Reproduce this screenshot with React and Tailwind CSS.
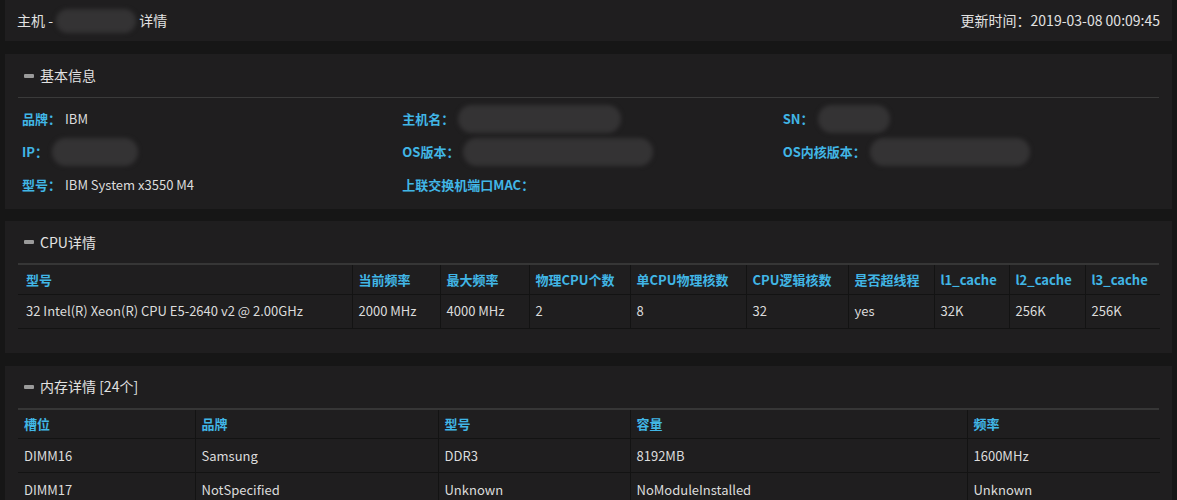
const font = { fontFamily: '"Noto Sans CJK SC", "Noto Sans", sans-serif' }

const cpuCols = [
  ['型号', 334],
  ['当前频率', 88],
  ['最大频率', 89],
  ['物理CPU个数', 101],
  ['单CPU物理核数', 116],
  ['CPU逻辑核数', 102],
  ['是否超线程', 86],
  ['l1_cache', 75],
  ['l2_cache', 76],
  ['l3_cache', 75],
]
const cpuRows = [
  ['32 Intel(R) Xeon(R) CPU E5-2640 v2 @ 2.00GHz', '2000 MHz', '4000 MHz', '2', '8', '32', 'yes', '32K', '256K', '256K'],
]

const memCols = [
  ['槽位', 177],
  ['品牌', 243],
  ['型号', 192],
  ['容量', 337],
  ['频率', 193],
]
const memRows = [
  ['DIMM16', 'Samsung', 'DDR3', '8192MB', '1600MHz'],
  ['DIMM17', 'NotSpecified', 'Unknown', 'NoModuleInstalled', 'Unknown'],
]

function Blur({ w, h = 28 }) {
  return (
    <span
      className="inline-block align-middle rounded-full bg-[#343334] blur-[2px]"
      style={{ width: w, height: h }}
    />
  )
}

function Title({ children, line }) {
  return (
    <div
      className={`flex items-center pl-[6px] text-[14px] text-[#e2e2e2] ${line ? 'h-[44px] border-b border-[#3a3a3a]' : 'h-[42px]'}`}
    >
      <span className="w-[10px] h-[4px] rounded-[1px] bg-[#9a9a9a] mr-[6px]" />
      {children}
    </div>
  )
}

function Info({ label, children }) {
  return (
    <div className="flex items-center h-[33px] pl-[4px] text-[13px]">
      <span className="font-bold text-[#41b6e6]">{label}：</span>
      <span className="text-[#dcdcdc] ml-[4px]">{children}</span>
    </div>
  )
}

function Table({ cols, rows, firstPad }) {
  return (
    <table className="table-fixed border-collapse w-full text-[13px]">
      <colgroup>
        {cols.map(([, w], i) => (
          <col key={i} style={{ width: w }} />
        ))}
      </colgroup>
      <thead>
        <tr className="h-[29px] border-b border-[#131313]">
          {cols.map(([name], i) => (
            <th
              key={i}
              className={`text-left font-bold text-[#41b6e6] ${i ? 'border-l border-[#131313] px-[6px]' : firstPad}`}
            >
              {name}
            </th>
          ))}
        </tr>
      </thead>
      <tbody>
        {rows.map((r, ri) => (
          <tr key={ri} className="h-[34px] border-b border-[#131313]">
            {r.map((c, i) => (
              <td
                key={i}
                className={`text-[#dcdcdc] ${i ? 'border-l border-[#131313] px-[6px]' : firstPad}`}
              >
                {c}
              </td>
            ))}
          </tr>
        ))}
      </tbody>
    </table>
  )
}

export default function App() {
  return (
    <div className="min-h-screen bg-[#161616] px-[5px]" style={font}>
      {/* 标题栏 */}
      <div className="h-[41px] bg-[#1f1e1f] flex items-center justify-between px-[12px] text-[14px] text-[#e2e2e2]">
        <div className="flex items-center">
          主机 -&nbsp;<Blur w={80} h={24} />&nbsp;详情
        </div>
        <div>更新时间：2019-03-08 00:09:45</div>
      </div>

      {/* 基本信息 */}
      <div className="mt-[13px] bg-[#1f1e1f] px-[13px] pb-[8px]">
        <Title line>基本信息</Title>
        <div className="grid grid-cols-3 pt-[4px]">
          <Info label="品牌">IBM</Info>
          <Info label="主机名">
            <Blur w={163} />
          </Info>
          <Info label="SN">
            <Blur w={72} />
          </Info>
          <Info label="IP">
            <Blur w={86} />
          </Info>
          <Info label="OS版本">
            <Blur w={190} />
          </Info>
          <Info label="OS内核版本">
            <Blur w={160} />
          </Info>
          <Info label="型号">IBM System x3550 M4</Info>
          <Info label="上联交换机端口MAC"></Info>
        </div>
      </div>

      {/* CPU详情 */}
      <div className="mt-[12px] bg-[#1f1e1f] px-[13px] pb-[24px]">
        <Title>CPU详情</Title>
        <div className="border-t-2 border-[#363636]">
          <Table cols={cpuCols} rows={cpuRows} firstPad="pl-[8px]" />
        </div>
      </div>

      {/* 内存详情 */}
      <div className="mt-[13px] bg-[#1f1e1f] px-[13px] pb-[25px]">
        <Title>内存详情 [24个]</Title>
        <div className="border-t-2 border-[#363636]">
          <Table cols={memCols} rows={memRows} firstPad="pl-[6px]" />
        </div>
      </div>
    </div>
  )
}
